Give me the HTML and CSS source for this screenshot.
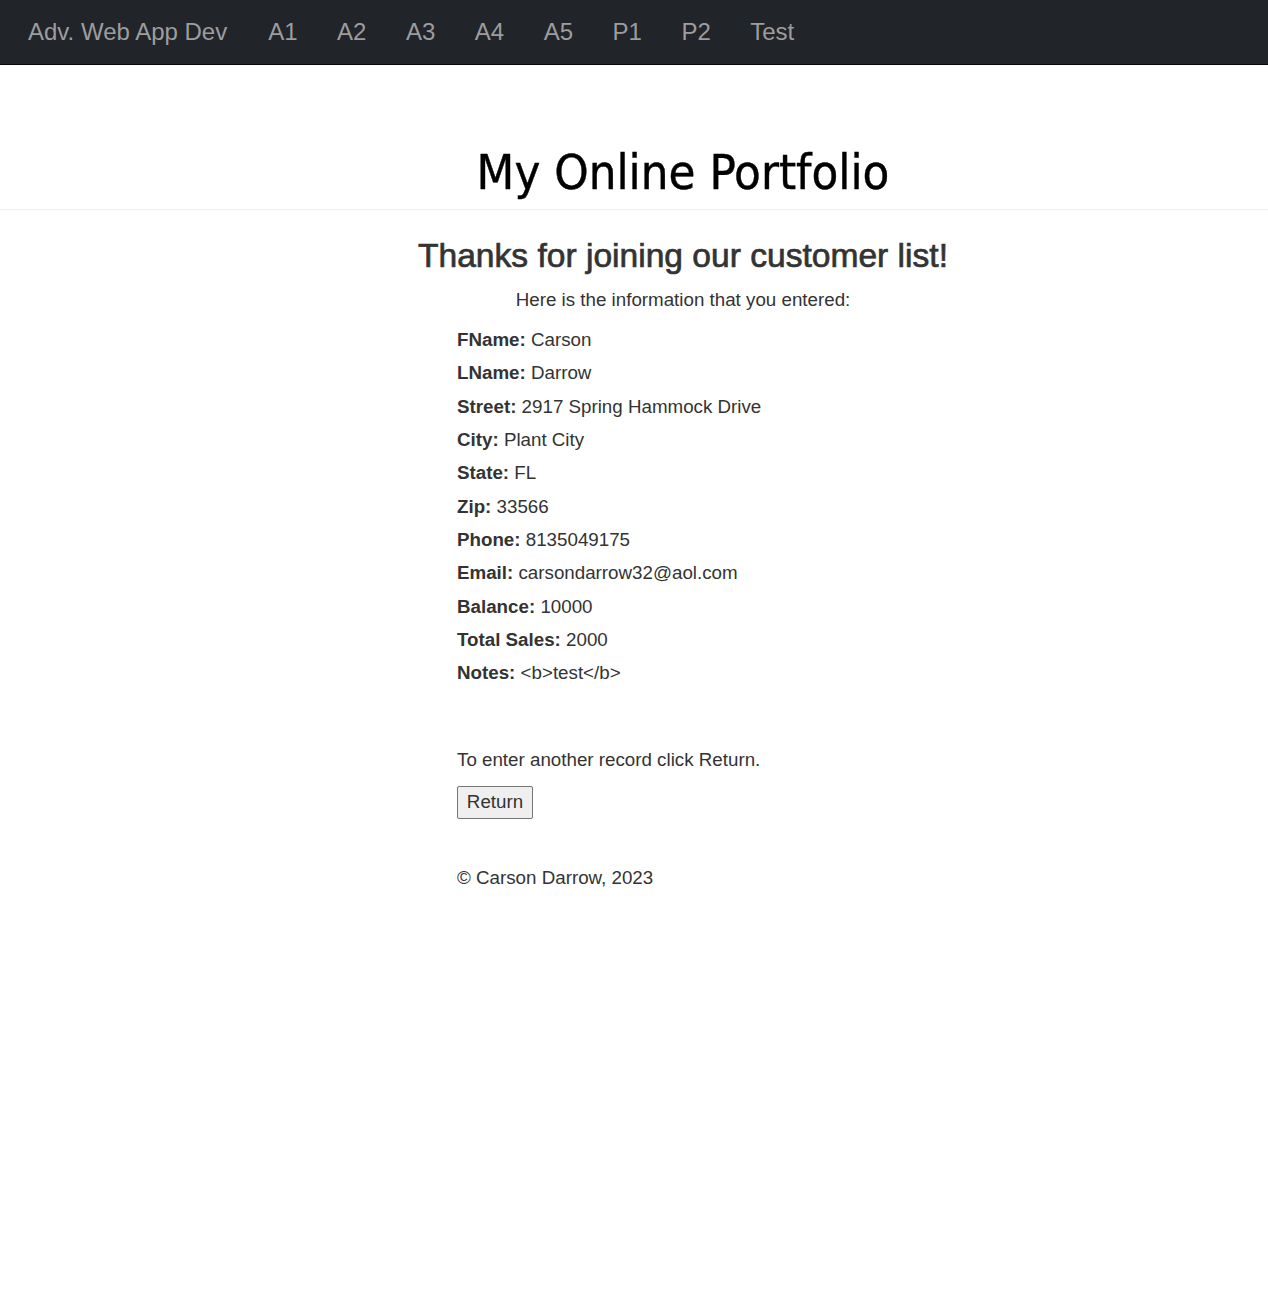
FILE: index.html
```html
<!DOCTYPE html>
<html>
<head>
<meta charset="utf-8">
<title>My Online Portfolio</title>
<link rel="stylesheet" href="styles.css">
</head>
<body>
<nav class="navbar">
  <a class="brand" href="#">Adv. Web App Dev</a>
  <a class="nav-link" href="#">A1</a>
  <a class="nav-link" href="#">A2</a>
  <a class="nav-link" href="#">A3</a>
  <a class="nav-link" href="#">A4</a>
  <a class="nav-link" href="#">A5</a>
  <a class="nav-link" href="#">P1</a>
  <a class="nav-link" href="#">P2</a>
  <a class="nav-link" href="#">Test</a>
</nav>
<header class="page-header">
  <h1 class="site-title">My Online Portfolio</h1>
</header>
<main class="main">
  <h2 class="thanks">Thanks for joining our customer list!</h2>
  <p class="intro">Here is the information that you entered:</p>
  <div class="details">
    <div class="row"><b>FName:</b> Carson</div>
    <div class="row"><b>LName:</b> Darrow</div>
    <div class="row"><b>Street:</b> 2917 Spring Hammock Drive</div>
    <div class="row"><b>City:</b> Plant City</div>
    <div class="row"><b>State:</b> FL</div>
    <div class="row"><b>Zip:</b> 33566</div>
    <div class="row"><b>Phone:</b> 8135049175</div>
    <div class="row"><b>Email:</b> carsondarrow32@aol.com</div>
    <div class="row"><b>Balance:</b> 10000</div>
    <div class="row"><b>Total Sales:</b> 2000</div>
    <div class="row"><b>Notes:</b> &lt;b&gt;test&lt;/b&gt;</div>
    <p class="again">To enter another record click Return.</p>
    <button class="return-btn" type="button">Return</button>
    <p class="footer">© Carson Darrow, 2023</p>
  </div>
</main>
</body>
</html>
```
FILE: styles.css
```css
html, body {
  margin: 0;
  padding: 0;
  background: #fff;
}
body {
  font-family: "Liberation Sans", Arial, sans-serif;
  font-size: 18.75px;
  color: #333;
}
.navbar {
  display: flex;
  align-items: center;
  height: 64px;
  background: #212429;
  border-bottom: 1px solid #080808;
  padding-left: 28px;
}
.navbar a {
  color: #9d9d9d;
  text-decoration: none;
  font-size: 24px;
}
.brand {
  margin-right: 41px;
}
.nav-link {
  margin-right: 39.5px;
}
.page-header {
  border-bottom: 1px solid #eee;
  padding-top: 70px;
  padding-left: 98px;
}
.site-title {
  margin: 0;
  text-align: center;
  font-family: "DejaVu Sans Condensed", "DejaVu Sans", sans-serif;
  font-weight: normal;
  font-size: 48.7px;
  line-height: 74px;
  color: #000;
  -webkit-text-stroke: 0.4px #000;
}
.main {
  padding-left: 98px;
}
.thanks {
  text-align: center;
  margin: 26px 0 0;
  font-size: 33.6px;
  font-weight: normal;
  line-height: 40px;
  -webkit-text-stroke: 0.7px #333;
}
.intro {
  text-align: center;
  margin: 10px 0 9px;
  line-height: 28px;
}
.details {
  width: 452px;
  margin: 0 auto;
}
.row {
  line-height: 33.33px;
}
.again {
  margin: 56px 0 0;
  line-height: 28px;
}
.return-btn {
  margin-top: 12px;
  font-family: "Liberation Sans", Arial, sans-serif;
  font-size: 18.75px;
  color: #333;
  background: #efefef;
  border: 1px solid #767676;
  border-radius: 2px;
  width: 76px;
  height: 33px;
  padding: 0;
}
.footer {
  margin: 45px 0 0;
  line-height: 28px;
}
```
